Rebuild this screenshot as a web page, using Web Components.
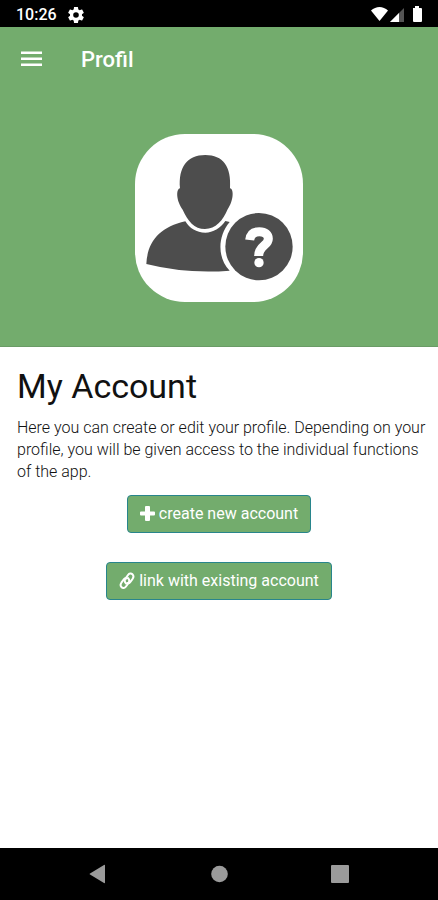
<!DOCTYPE html>
<html lang="en">
<head>
<meta charset="utf-8">
<meta name="viewport" content="width=device-width, initial-scale=1">
<title>Profil</title>
<style>
body { margin: 0; font-family: Roboto, "Liberation Sans", sans-serif; background: #fff; }
</style>
</head>
<body>
<profile-screen></profile-screen>
<script>
function define(name, html) {
  const template = document.createElement('template');
  template.innerHTML = html;
  customElements.define(name, class extends HTMLElement {
    constructor() {
      super();
      this.attachShadow({ mode: 'open' }).append(template.content.cloneNode(true));
    }
  });
}

define('status-bar', `
<style>
:host { display: flex; align-items: center; justify-content: space-between; height: 27px; padding: 0 15px 0 16px; background: #000; color: #fff; font-size: 16px; line-height: 20px; font-weight: 500; box-sizing: border-box; }
div { display: flex; align-items: center; }
.left { gap: 11px; padding-top: 2px; }
svg { display: block; }
</style>
<div class="left"><span>10:26</span>
<svg width="16" height="16" viewBox="2 2 20 20" fill="#fff" aria-hidden="true"><path fill-rule="evenodd" d="M19.43 12.98c.04-.32.07-.64.07-.98s-.03-.66-.07-.98l2.11-1.65c.19-.15.24-.42.12-.64l-2-3.46c-.12-.22-.39-.3-.61-.22l-2.49 1c-.52-.4-1.08-.73-1.69-.98l-.38-2.65A.49.49 0 0 0 14 2h-4c-.25 0-.46.18-.49.42l-.38 2.65c-.61.25-1.17.59-1.69.98l-2.49-1c-.23-.09-.49 0-.61.22l-2 3.46c-.13.22-.07.49.12.64l2.11 1.65c-.04.32-.07.65-.07.98s.03.66.07.98l-2.11 1.65c-.19.15-.24.42-.12.64l2 3.46c.12.22.39.3.61.22l2.49-1c.52.4 1.08.73 1.69.98l.38 2.65c.03.24.24.42.49.42h4c.25 0 .46-.18.49-.42l.38-2.65c.61-.25 1.17-.59 1.69-.98l2.49 1c.23.09.49 0 .61-.22l2-3.46c.12-.22.07-.49-.12-.64zM12 15.500a3.500 3.500 0 1 1 0-7 3.500 3.500 0 0 1 0 7z"/></svg></div>
<div><svg width="54" height="16" viewBox="0 0 54 16" aria-hidden="true">
<path d="M2 4.500C7-.2 14-.2 19 4.500L10.500 15z" fill="#fff"/>
<path d="M35 2v14H21z" fill="#555"/><path d="M30 7V16H21z" fill="#fff"/>
<path d="M44 2h2V0h4v2h2q1 0 1 1v12q0 1-1 1h-7q-1 0-1-1z" fill="#fff"/>
</svg></div>`);

define('app-toolbar', `
<style>
:host { display: flex; align-items: center; gap: 38px; height: 65px; padding: 0 20px; color: #fff; }
button { display: block; padding: 0; border: 0; background: none; color: inherit; }
svg { display: block; }
span { font-size: 22px; line-height: 28px; font-weight: 500; }
</style>
<button type="button" aria-label="Menu"><svg width="23" height="18" viewBox="0 0 23 18" fill="#fff"><path d="M1 .500h21v2.500H1zM1 6.500h21V9H1zM1 12.500h21V15H1z"/></svg></button>
<span><slot></slot></span>`);

define('profile-avatar', `
<style>
:host { display: block; width: 168px; height: 168px; border-radius: 50px; background: #fff; }
svg { display: block; width: 100%; height: 100%; }
</style>
<svg viewBox="17 27 504 504" role="img" aria-label="Unknown user">
<path fill="#4d4d4d" d="M168 289C91 306 54 351 51 417Q170 447 301 437C264 400 264 334 301 291L288 288C274 309 251 323 228 323C201 323 181 310 168 289Z"/>
<path fill="#4d4d4d" d="M152 190C147 126 173 90 228 90C281 90 307 125 302 190C315 193 312 229 295 253C281 287 259 312 227 312C195 312 175 288 160 254C141 229 139 193 152 190Z"/>
<circle cx="389" cy="365" r="101" fill="#4d4d4d"/>
<path fill="none" stroke="#fff" stroke-width="27" d="M361 345C363 327 374 320 390 320C408 320 417 329 417 341C417 363 388 360 388 393"/>
<circle cx="389" cy="413" r="14" fill="#fff"/>
</svg>`);

define('icon-button', `
<style>
:host { display: block; }
button { display: flex; align-items: center; gap: 4px; height: 38px; padding: 0 12px 1px; border: 1px solid #28858c; border-radius: 4px; background: #73ac6d; color: #fff; font-family: inherit; font-size: 16px; line-height: 24px; }
</style>
<button type="button"><slot name="icon"></slot><slot></slot></button>`);

define('nav-bar', `
<style>
:host { display: flex; align-items: center; justify-content: center; gap: 96px; height: 52px; background: #000; }
button { display: block; padding: 0; border: 0; background: none; }
svg { display: block; }
</style>
<button type="button" aria-label="Back"><svg width="25" height="20" viewBox="0 0 25 20" fill="#9b9b9b"><path d="M19 1.500v17q0 1-1 .5L4 10.500q-1-.5 0-1L18 1q1-.5 1 .5z"/></svg></button>
<button type="button" aria-label="Home"><svg width="25" height="20" viewBox="0 0 25 20" fill="#9b9b9b"><circle cx="12.500" cy="10" r="8.300"/></svg></button>
<button type="button" aria-label="Recent apps"><svg width="25" height="20" viewBox="0 0 25 20" fill="#9b9b9b"><rect x="3" y="1" width="18" height="18" rx="1"/></svg></button>`);

define('profile-screen', `
<style>
:host { display: flex; flex-direction: column; min-height: 100vh; }
header { display: flex; flex-direction: column; background: #73ac6d; border-bottom: 1px solid #6a9b66; padding-bottom: 44px; }
profile-avatar { margin: 42px auto 0; }
main { flex: 1; padding-top: 19px; }
h1, p { padding: 0 10px 0 17px; }
h1 { margin: 0 0 11px; font-size: 34px; line-height: 40px; font-weight: 400; color: #111; }
p { margin: 0; font-size: 16px; line-height: 22px; font-weight: 300; color: #111; }
.actions { display: flex; flex-direction: column; align-items: center; gap: 29px; margin-top: 12px; }
svg { display: block; }
</style>
<status-bar></status-bar>
<header><app-toolbar>Profil</app-toolbar><profile-avatar></profile-avatar></header>
<main>
<h1>My Account</h1>
<p>Here you can create or edit your profile. Depending on your profile, you will be given access to the individual functions of the app.</p>
<div class="actions">
<icon-button><svg slot="icon" width="15" height="16" viewBox="0 0 15 16" fill="#fff" aria-hidden="true"><path d="M6 0h3q1 0 1 1v4.500h4q1 0 1 1v2q0 1-1 1h-4V14q0 1-1 1H6q-1 0-1-1V9.500H1q-1 0-1-1v-2q0-1 1-1h4V1q0-1 1-1z"/></svg>create new account</icon-button>
<icon-button><svg slot="icon" width="16" height="18" viewBox="0 0 16 18" fill="none" stroke="#fff" stroke-width="2" stroke-linecap="round" aria-hidden="true"><path d="M7 11.500C5.500 10 5.500 8 6.500 6.500L9 3C10.200 1.300 12.200 1 13.400 2.200S14.700 5.200 13.600 6.800L11 10.300Q10 11.500 8.500 11"/><path d="M9 6C10.500 7.500 10.500 9.500 9.500 11L7 14.500C5.800 16.200 3.800 16.500 2.600 15.300S1.300 12.300 2.400 10.700L5 7.200Q6 6 7.500 6.500"/></svg>link with existing account</icon-button>
</div>
</main>
<nav-bar></nav-bar>`);
</script>
</body>
</html>
